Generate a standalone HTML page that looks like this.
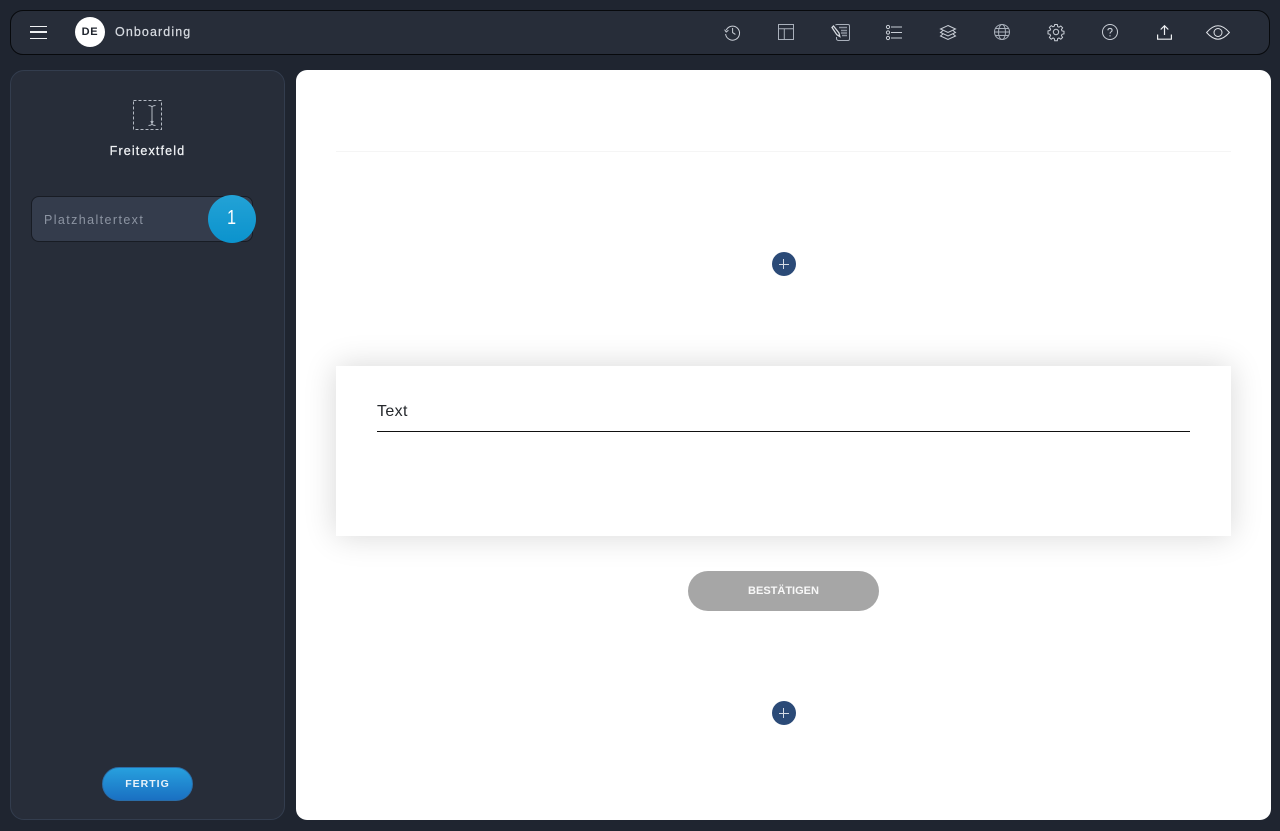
<!DOCTYPE html>
<html lang="de">
<head>
<meta charset="utf-8">
<title>Onboarding</title>
<style>
html,body{margin:0;padding:0;width:1280px;height:831px;overflow:hidden;background:#1f2530;font-family:"Liberation Sans",sans-serif}
.abs,.abs>*{box-sizing:border-box}
.abs{position:absolute}
#top{left:10px;top:10px;width:1260px;height:45px;background:#272d39;border:1px solid #07090c;border-radius:13px}
#burger{left:30px;top:26px;width:17px;height:13px;border-top:1.5px solid #f0f2f4;border-bottom:1.5px solid #f0f2f4}
#burger:after{content:"";position:absolute;left:0;right:0;top:4.25px;height:1.5px;background:#f0f2f4}
#de{left:75px;top:17px;width:30px;height:30px;border-radius:50%;background:#fff;color:#20252e;font-weight:700;font-size:11px;line-height:30px;text-align:center;letter-spacing:.7px}
#title{left:115px;top:24px;color:#d8dce2;font-size:12.5px;line-height:16px;letter-spacing:1.1px;-webkit-text-stroke:.2px #d8dce2}
svg{position:absolute;overflow:visible;fill:none;stroke:#c9ced6;stroke-width:1}
#side{left:10px;top:70px;width:275px;height:750px;background:#272d39;border:1px solid #333d4e;border-radius:14px}
#ft{left:10px;top:143px;width:275px;text-align:center;color:#f0f2f5;font-size:12.5px;line-height:16px;letter-spacing:1.15px;-webkit-text-stroke:.25px #f0f2f5}
#field{left:31px;top:196px;width:222px;height:46px;background:#343c4c;border:1px solid #181c24;border-radius:8px}
#ph{left:44px;top:212px;color:#8c94a2;font-size:12.5px;line-height:16px;letter-spacing:1.4px}
#badge{left:208px;top:195px;width:48px;height:48px;border-radius:50%;background:linear-gradient(#23a2d6,#0b93cd);color:#fff;font-size:20px;line-height:47px;text-align:center}
#badge span{display:inline-block;transform:scaleX(.8)}
#fertig{left:102px;top:767px;width:91px;height:34px;border-radius:17px;background:linear-gradient(#27a0de,#1a70c2);border:1px solid #2a6da8;color:#e8f2fa;font-weight:700;font-size:10.5px;line-height:32px;text-align:center;letter-spacing:1px}
#main{left:296px;top:70px;width:975px;height:750px;background:#fff;border-radius:11px}
#rule{left:336px;top:151px;width:895px;height:1px;background:#f5f5f5}
.plus{width:24px;height:24px;left:771.5px;border-radius:50%;background:#2b4a77}
.plus:before{content:"";position:absolute;left:7px;top:11.5px;width:10px;height:1px;background:#d5dbe5}
.plus:after{content:"";position:absolute;left:11.5px;top:7px;width:1px;height:10px;background:#d5dbe5}
#card{left:336px;top:366px;width:895px;height:170px;background:#fff;box-shadow:0 0 30px rgba(0,0,0,.16)}
#text{left:377px;top:402px;color:#25282c;font-size:16px;line-height:19px;letter-spacing:.35px}
#line{left:377px;top:431px;width:813px;height:1px;background:#111}
#ok{left:688px;top:571px;width:191px;height:40px;border-radius:20px;background:#a6a6a6;color:#f8f8f8;font-weight:700;font-size:11px;line-height:40px;text-align:center}
</style>
</head>
<body>
<div class="abs" id="top"></div>
<div class="abs" id="burger"></div>
<div class="abs" id="de">DE</div>
<div class="abs" id="title">Onboarding</div>

<!-- history -->
<svg style="left:724px;top:24px" width="17" height="17" viewBox="0 0 17 17"><path d="M2.2 6.2A7 7 0 1 1 1.6 10"/><path d="M.6 5.6 2.2 8 4.4 6.2"/><path d="M8.6 4v4.6l2.8 1.8"/></svg>
<!-- layout -->
<svg style="left:778px;top:24px" width="16" height="16" viewBox="0 0 16 16"><path d="M.5.5h15v15H.5zM.5 4.7h15M6.3 4.7v10.8" stroke="#a9b0bb"/></svg>
<!-- edit list -->
<svg style="left:831px;top:24px" width="19" height="17" viewBox="0 0 19 17"><path d="M4.500 1.200Q4.800.5 6 .5h11q1.500 0 1.500 1.500v13q0 1.500-1.500 1.500H7.500Q6 16.500 5.500 15v-2" stroke="#a9b0bb"/><path d="M8 3.500h8M10 6.500h6M10 9h6M11 11.500h5" stroke="#8b929e" stroke-width="1.600"/><path d="M1 3.500 2.500 2l5.500 7 .8 3.500-3-1.800z" stroke="#d5d9df" stroke-width="1.300"/></svg>
<!-- list -->
<svg style="left:886px;top:25px" width="16" height="15" viewBox="0 0 16 15"><circle cx="2" cy="2" r="1.600"/><circle cx="2" cy="7.500" r="1.600"/><circle cx="2" cy="13" r="1.600"/><path d="M5 2h11M5 7.500h11M5 13h11"/></svg>
<!-- layers -->
<svg style="left:940px;top:25px" width="16" height="15" viewBox="0 0 16 15"><path d="M8 .5 15.500 4 8 7.500.5 4z"/><path d="M3 5.500.5 7.500 8 11l7.500-3.500L13 5.500"/><path d="M3 9 .5 11 8 14.500l7.500-3.500L13 9"/></svg>
<!-- globe -->
<svg style="left:994px;top:24px" width="16" height="16" viewBox="0 0 16 16"><circle cx="8" cy="8" r="7.500" stroke="#a9b0bb"/><ellipse cx="8" cy="8" rx="3.500" ry="7.500" stroke="#a9b0bb"/><path d="M.5 8h15M1.500 4.500h13M1.500 11.500h13" stroke="#a9b0bb"/></svg>
<!-- gear -->
<svg style="left:1048px;top:24px" width="16" height="16" viewBox="0 0 16 16"><circle cx="8" cy="8" r="2.700"/><path d="M6.700.5h2.600l.4 2.100 1.300.6 1.800-1.200 1.800 1.800-1.200 1.800.6 1.300 2 .4v2.600l-2 .4-.6 1.300 1.200 1.800-1.800 1.800-1.800-1.200-1.300.6-.4 2.100H6.700l-.4-2.100-1.300-.6-1.800 1.200-1.800-1.800 1.200-1.800-.6-1.300-2-.4V6.900l2-.4.600-1.300-1.200-1.800 1.800-1.800L5 2.800l1.300-.6z"/></svg>
<!-- help -->
<svg style="left:1102px;top:24px" width="16" height="16" viewBox="0 0 16 16"><circle cx="8" cy="8" r="7.500"/><path d="M5.900 6.300Q6 4.400 8 4.400q2.100 0 2.100 1.800 0 1-1 1.600-1.100.6-1.100 1.800" stroke-width="1.100"/><path d="M8 11.200v1.200" stroke-width="1.100"/></svg>
<!-- upload -->
<svg style="left:1157px;top:25px" width="15" height="15" viewBox="0 0 15 15"><path d="M7.500 10V.8M3.700 4.500 7.500.7l3.800 3.800M.6 9.500v4.700h13.800V9.500" stroke="#eef0f3" stroke-width="1.200"/></svg>
<!-- eye -->
<svg style="left:1206px;top:25px" width="24" height="15" viewBox="0 0 24 15"><path d="M.6 7.500Q6.500.8 12 .8t11.400 6.700Q17.500 14.200 12 14.200T.6 7.500z" stroke="#dfe2e7"/><circle cx="12" cy="7.500" r="4" stroke="#dfe2e7"/></svg>

<div class="abs" id="side"></div>
<svg style="left:133px;top:100px" width="29" height="30" viewBox="0 0 29 30"><path d="M.5.500h28v29H.5z" stroke-dasharray="3 2" stroke="#b4bac4"/><path d="M19 6v18M15.500 5.500q2.300 0 3.500 1.300 1.200-1.300 3.500-1.300M15.500 25.500q2.300 0 3.500-1.300 1.200 1.300 3.500 1.300M17.800 21l1.200 2.500 1.200-2.500" stroke="#b4bac4"/></svg>
<div class="abs" id="ft">Freitextfeld</div>
<div class="abs" id="field"></div>
<div class="abs" id="ph">Platzhaltertext</div>
<div class="abs" id="badge"><span>1</span></div>
<div class="abs" id="fertig">FERTIG</div>

<div class="abs" id="main"></div>
<div class="abs" id="rule"></div>
<div class="abs plus" style="top:252px"></div>
<div class="abs" id="card"></div>
<div class="abs" id="text">Text</div>
<div class="abs" id="line"></div>
<div class="abs" id="ok">BESTÄTIGEN</div>
<div class="abs plus" style="top:701px"></div>
</body>
</html>
